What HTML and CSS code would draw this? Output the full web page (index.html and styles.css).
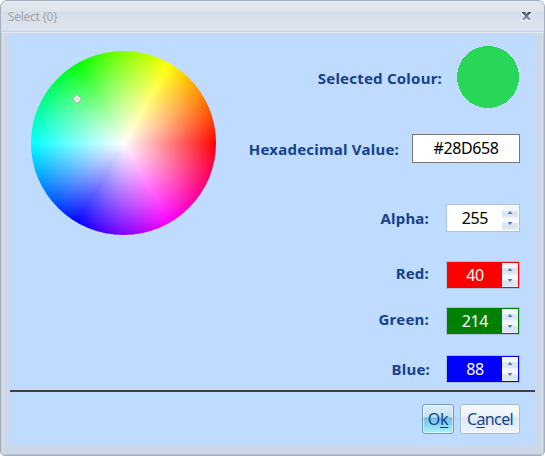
FILE: index.html
```html
<!DOCTYPE html>
<html lang="en">
<head>
<meta charset="utf-8">
<title>Select {0}</title>
<link rel="stylesheet" href="styles.css">
</head>
<body>
<div class="window">
  <header class="titlebar">
    <span class="title">Select {0}</span>
    <svg class="close" width="11" height="10" viewBox="0 0 11 10">
      <defs><linearGradient id="x" x1="0" y1="0" x2="0" y2="1"><stop offset="0" stop-color="#454c59"/><stop offset="1" stop-color="#8ba6d5"/></linearGradient></defs>
      <path d="M0 9V7L3 5L0 2H4L5.500 3.500L7 2H11L8 5L11 7V9H7L5.500 7.500L4 9Z" fill="#fff"/>
      <path d="M1 0H4L5.500 2L7 0H10V1L7 4L10 7V8H7L5.500 6L4 8H1V7L4 4L1 1Z" fill="url(#x)"/>
    </svg>
  </header>
  <main class="content">
    <section class="picker">
      <div class="wheel">
        <svg class="marker" width="10" height="10" viewBox="0 0 10 10"><path d="M5 .5L9.500 5L5 9.500L.5 5Z" fill="#eee" stroke="#999"/><path d="M5 1.700L8.300 5L5 8.300L1.700 5Z" fill="#e4e0e0" stroke="#fff" stroke-width=".8"/></svg>
      </div>
      <div class="form">
        <div class="row row-swatch"><span class="label">Selected Colour:</span><svg class="swatch" width="62" height="62"><circle cx="31" cy="31" r="31" fill="#28d658" shape-rendering="crispEdges"/></svg></div>
        <div class="row row-hex"><span class="label">Hexadecimal Value:</span><div class="hex">#28D658</div></div>
        <div class="row row-alpha"><span class="label">Alpha:</span><div class="spin alpha"><span class="num">255</span><span class="arrows"><i class="up"></i><i class="down"></i></span></div></div>
        <div class="row row-red"><span class="label">Red:</span><div class="spin red"><span class="num">40</span><span class="arrows"><i class="up"></i><i class="down"></i></span></div></div>
        <div class="row row-green"><span class="label">Green:</span><div class="spin green"><span class="num">214</span><span class="arrows"><i class="up"></i><i class="down"></i></span></div></div>
        <div class="row row-blue"><span class="label">Blue:</span><div class="spin blue"><span class="num">88</span><span class="arrows"><i class="up"></i><i class="down"></i></span></div></div>
      </div>
    </section>
    <footer class="actions">
      <button class="btn ok"><span>O<u>k</u></span></button>
      <button class="btn cancel"><span>C<u>a</u>ncel</span></button>
    </footer>
  </main>
</div>
</body>
</html>
```
FILE: styles.css
```css
* { box-sizing: border-box; }
html { background: #fff; }
body { margin: 0; font-family: "Noto Sans", "Open Sans", sans-serif; }
.window {
  width: 545px; height: 456px; padding: 0 9px 9px;
  border: 1px solid #a5afbc; border-radius: 7px 7px 5px 5px;
  background: #ccd8e8;
  box-shadow: inset 1px 0 #bfc9d8, inset 2px 0 #dae3ef, inset -1px 0 #bac9d9, inset -2px 0 #d7e1ef, inset 0 -1px #b5c2d0;
}
.titlebar {
  display: flex; justify-content: space-between; align-items: flex-start;
  height: 32px; margin: 0 -9px; padding: 8px 12px 0 7px;
  border-radius: 6px 6px 0 0; border-bottom: 1px solid #e4ebf4;
  background: linear-gradient(#e3e8f0, #dfe4ed 10px, #d5deea 11px, #dce4ef 29px, #c8d3e3 30px);
}
.title { font-size: 12px; line-height: 16px; letter-spacing: -.3px; color: #a3a4a7; }
.close { margin-top: 3px; }
.content { height: 413px; background: #bfdbff; }
.picker { display: flex; justify-content: space-between; height: 359px; padding: 0 15px 0 21px; border-bottom: 2px solid #404040; }
.wheel {
  position: relative; width: 185px; height: 184px; margin-top: 18px; border-radius: 50%;
  background: radial-gradient(closest-side, #fff, rgba(255,255,255,0)), conic-gradient(from 90deg, #f00, #f0f, #00f, #0ff, #0f0, #ff0, #f00);
}
.marker { position: absolute; left: 41px; top: 43px; }
.form { display: flex; flex-direction: column; width: 280px; padding-top: 13px; }
.row { display: flex; justify-content: flex-end; align-items: center; flex: none; height: 28px; }
.row-swatch { height: 62px; gap: 15px; padding-right: 1px; }
.row-swatch .label { padding-top: 2px; }
.row-hex { height: 29px; margin-top: 26px; gap: 13px; }
.row-alpha { margin-top: 41px; gap: 17px; }
.row-red { margin-top: 29px; gap: 17px; }
.row-green { margin-top: 18px; gap: 17px; }
.row-blue { margin-top: 20px; gap: 16px; }
.row-red .label, .row-green .label { padding-bottom: 4px; }
.label { font-size: 15px; font-weight: 700; line-height: 20px; letter-spacing: .22px; color: #15428b; white-space: nowrap; }
.hex { width: 108px; height: 29px; border: 1px solid #767676; background: #fff; font-size: 16px; line-height: 27px; letter-spacing: -.4px; text-align: center; }
.spin { display: flex; width: 74px; height: 28px; padding: 1px; border: 1px solid #abc1de; }
.num { flex: 1; font-size: 16px; line-height: 24px; letter-spacing: -.4px; text-align: center; }
.arrows {
  display: flex; flex-direction: column; align-items: center; justify-content: space-between;
  width: 16px; padding: 5px 0 5px;
  background: linear-gradient(#f3f6fc 0 5px, #dce6f3 5px 10px, #edf4fb 12px, #f5f8fc 12px 17px, #dce6f3 17px 22px, #e9f1fb);
}
.up, .down { width: 5px; height: 3px; background: #547cae; clip-path: polygon(50% 0, 100% 100%, 0 100%); }
.down { clip-path: polygon(0 0, 100% 0, 50% 100%); }
.alpha { background: #fff; }
.red { background: #f00; color: #fff; }
.green { background: #008000; color: #fff; }
.blue { background: #00f; color: #fff; }
.actions { display: flex; justify-content: flex-end; gap: 6px; padding: 12px 15px 0 0; }
.btn {
  display: flex; align-items: center; justify-content: center; height: 30px; padding: 0;
  border: 1px solid #9ebada; border-radius: 3px; color: #15428b;
  font: 16px/20px "Noto Sans", sans-serif; letter-spacing: -.6px;
}
.btn u { text-decoration-thickness: 1px; text-underline-offset: 2px; }
.ok { width: 32px; border-color: #7598b8; letter-spacing: -.2px; background: linear-gradient(#dceff8, #c1e1f2 12px, #75bce0 13px, #a7f3fb); box-shadow: inset 0 0 0 1px rgba(255,255,255,.55); }
.cancel { width: 60px; background: linear-gradient(#f7faff, #edf2fb 12px, #dce6f5 13px, #f1f6ff); box-shadow: inset 0 0 0 1px rgba(255,255,255,.6); }
```
